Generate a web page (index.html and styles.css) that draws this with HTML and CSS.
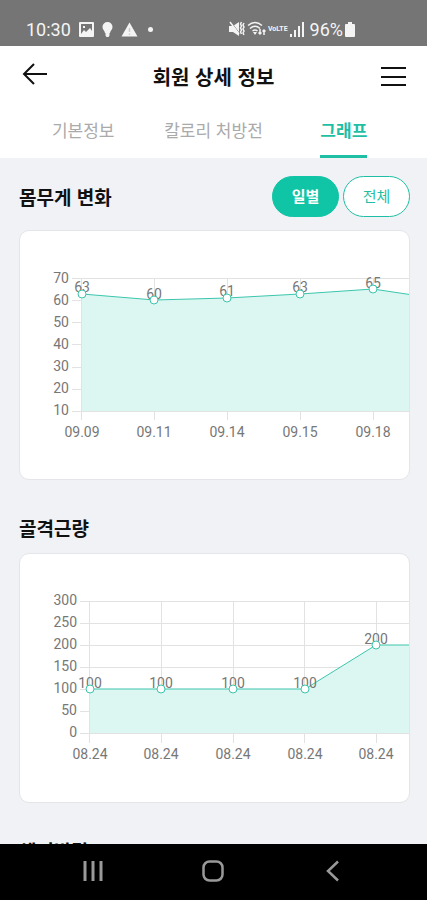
FILE: index.html
```html
<!DOCTYPE html>
<html lang="ko">
<head>
  <meta charset="UTF-8">
  <meta name="viewport" content="width=device-width, initial-scale=1.0">
  <title>회원 상세 정보</title>
  <link rel="stylesheet" href="styles.css">
</head>
<body>
  <div class="status-bar">
    <div class="status-left">
      <span>10:30</span>
      <svg width="15" height="15" viewBox="0 0 15 15">
        <path fill="#f4f4f4" fill-rule="evenodd" d="M1 0h13q1 0 1 1v13q0 1-1 1H1q-1 0-1-1V1q0-1 1-1zM2 2v10l3-4 2 2 4-4 2 3V2zM4 4h2v2H4z"/>
      </svg>
      <svg width="11" height="15" viewBox="0 0 11 15">
        <path fill="#f4f4f4" d="M5.500 0a5 5 0 0 1 5 5c0 2.500-2 3.500-2.500 6H3C2.500 8.500.5 7.500.5 5a5 5 0 0 1 5-5zM3.500 11h4v2.500l-1 1.500h-2l-1-1.500z"/>
      </svg>
      <svg width="17" height="15" viewBox="0 0 17 15">
        <path fill="#f4f4f4" d="M8.500.5L16.500 14.500H.5z"/>
        <path stroke="#ccc" stroke-width="1.500" d="M8.500 6v4M8.500 11.500v1.500"/>
      </svg>
      <svg class="dot" width="5" height="5" viewBox="0 0 5 5"><circle cx="2.500" cy="2.500" r="2.500" fill="#f4f4f4"/></svg>
    </div>
    <div class="status-right">
      <svg width="16" height="16" viewBox="0 0 16 16" fill="none" stroke="#f4f4f4">
        <path fill="#f4f4f4" stroke="none" d="M0 5h4l6-4v14l-6-4H0z"/>
        <path stroke="#757575" d="M2 1l9 12"/>
        <path stroke-width="1.500" d="M1 1l9 12M12.500 1l-1 2 1 2-1 2 1 2-1 2 1 2M15 2l-1 2 1 2-1 2 1 2-1 2 1 2"/>
      </svg>
      <svg width="19" height="16" viewBox="0 0 19 16" fill="none" stroke="#f4f4f4" stroke-width="1.500">
        <path d="M1 4.500q7-6 14 0M3 7.500q5-4.500 10 0M5.500 10q2.500-2 5 0"/>
        <path fill="#f4f4f4" stroke="none" d="M6 11h4l-2 3z"/>
        <path d="M13 8v5M11.500 11.500l1.500 1.500 1.500-1.500M17 14V9M15.500 10.500L17 9l1.500 1.500"/>
      </svg>
      <span class="volte">VoLTE</span>
      <svg width="14" height="15" viewBox="0 0 14 15" fill="#f4f4f4">
        <path d="M0 12h2v3H0zM4 8h2v7H4zM8 4h2v11H8zM12 0h2v15h-2z"/>
      </svg>
      <span class="battery">96%</span>
      <svg width="10" height="15" viewBox="0 0 10 15" fill="#f4f4f4">
        <path d="M3 0h4v2h2q1 0 1 1v11q0 1-1 1H1q-1 0-1-1V3q0-1 1-1h2z"/>
      </svg>
    </div>
  </div>

  <header class="header">
    <button class="icon-btn" aria-label="뒤로">
      <svg width="26" height="26" viewBox="0 0 26 26" fill="none" stroke="#111" stroke-width="2">
        <path d="M13 1L3 11l10 10M3 11h23"/>
      </svg>
    </button>
    <h1>회원 상세 정보</h1>
    <button class="icon-btn" aria-label="메뉴">
      <svg width="26" height="26" viewBox="0 0 26 26" stroke="#111" stroke-width="2">
        <path d="M1 5h25M1 14h25M1 22h25"/>
      </svg>
    </button>
  </header>

  <nav class="tabs">
    <a href="#info">기본정보</a>
    <a href="#calorie">칼로리 처방전</a>
    <a href="#graph" class="active">그래프</a>
  </nav>

  <main class="content">
    <section>
      <div class="section-head">
        <h2>몸무게 변화</h2>
        <div class="pills">
          <button class="pill pill-on">일별</button>
          <button class="pill">전체</button>
        </div>
      </div>
      <div class="card">
        <svg class="chart" width="480" height="248" viewBox="0 0 480 248">
          <path class="grid" d="M52 47.500H480M52 69.500H62M52 91.500H62M52 113.500H62M52 136.500H62M52 158.500H62M61.500 47V189M134.500 47V189M207.500 47V189M280.500 47V189M353.500 47V189M426.500 47V189"/>
          <path class="area" d="M62 63L134.500 69L207 67L280 63L353 58L426 69V180H62z"/>
          <path class="grid" d="M52 180.500H480"/>
          <path class="line" d="M62 63L134.500 69L207 67L280 63L353 58L426 69"/>
          <g class="label-y">
            <text x="49" y="52">70</text>
            <text x="49" y="74">60</text>
            <text x="49" y="96">50</text>
            <text x="49" y="118">40</text>
            <text x="49" y="140">30</text>
            <text x="49" y="162">20</text>
            <text x="49" y="184">10</text>
          </g>
          <g class="label-x">
            <text x="62" y="206">09.09</text>
            <text x="134" y="206">09.11</text>
            <text x="207" y="206">09.14</text>
            <text x="280" y="206">09.15</text>
            <text x="353" y="206">09.18</text>
          </g>
          <g class="label-x">
            <text x="62" y="61">63</text>
            <text x="134" y="68">60</text>
            <text x="207" y="65">61</text>
            <text x="280" y="61">63</text>
            <text x="353" y="57">65</text>
          </g>
          <g class="dots">
            <circle cx="62" cy="63" r="4"/>
            <circle cx="134" cy="69" r="4"/>
            <circle cx="207" cy="67" r="4"/>
            <circle cx="280" cy="63" r="4"/>
            <circle cx="353" cy="58" r="4"/>
          </g>
        </svg>
      </div>
    </section>

    <section>
      <div class="section-head">
        <h2>골격근량</h2>
      </div>
      <div class="card">
        <svg class="chart" width="480" height="248" viewBox="0 0 480 248">
          <path class="grid" d="M60 47.500H480M60 69.500H480M60 91.500H480M60 113.500H480M60 135.500H480M60 157.500H480M69.500 47V189M141.500 47V189M213.500 47V189M284.500 47V189M356.500 47V189M428.500 47V189"/>
          <path class="area" d="M70 135H285L356 91H428V179H70z"/>
          <path class="grid" d="M60 179.500H480"/>
          <path class="line" d="M70 135H285L356 91H428"/>
          <g class="label-y">
            <text x="57" y="51">300</text>
            <text x="57" y="73">250</text>
            <text x="57" y="95">200</text>
            <text x="57" y="117">150</text>
            <text x="57" y="139">100</text>
            <text x="57" y="161">50</text>
            <text x="57" y="183">0</text>
          </g>
          <g class="label-x">
            <text x="70" y="205">08.24</text>
            <text x="141" y="205">08.24</text>
            <text x="213" y="205">08.24</text>
            <text x="285" y="205">08.24</text>
            <text x="356" y="205">08.24</text>
          </g>
          <g class="label-x">
            <text x="70" y="134">100</text>
            <text x="141" y="134">100</text>
            <text x="213" y="134">100</text>
            <text x="285" y="134">100</text>
            <text x="356" y="90">200</text>
          </g>
          <g class="dots">
            <circle cx="70" cy="135" r="4"/>
            <circle cx="141" cy="135" r="4"/>
            <circle cx="213" cy="135" r="4"/>
            <circle cx="285" cy="135" r="4"/>
            <circle cx="356" cy="91" r="4"/>
          </g>
        </svg>
      </div>
    </section>

    <section>
      <div class="section-head">
        <h2>체지방량</h2>
      </div>
    </section>
  </main>

  <footer class="nav-bar">
    <button class="icon-btn" aria-label="최근 앱">
      <svg width="22" height="22" viewBox="0 0 22 22" stroke="#999" stroke-width="3">
        <path d="M3 1v20M11 1v20M19 1v20"/>
      </svg>
    </button>
    <button class="icon-btn" aria-label="홈">
      <svg width="22" height="22" viewBox="0 0 22 22" fill="none" stroke="#999" stroke-width="2.500">
        <rect x="1.500" y="1.500" width="19" height="19" rx="6"/>
      </svg>
    </button>
    <button class="icon-btn" aria-label="뒤로 가기">
      <svg width="22" height="22" viewBox="0 0 22 22" fill="none" stroke="#999" stroke-width="2.500">
        <path d="M15 1.500L5 11l10 9.500"/>
      </svg>
    </button>
  </footer>
</body>
</html>
```

FILE: styles.css
```css
* {
  box-sizing: border-box;
}

body {
  font-family: "Noto Sans CJK KR", sans-serif;
  margin: 0;
  height: 100vh;
  display: flex;
  flex-direction: column;
  background-color: #f1f2f6;
  color: #111;
}

h1, h2 {
  margin: 0;
  font-weight: bold;
}

button {
  font-family: inherit;
  cursor: pointer;
}

.icon-btn {
  display: flex;
  padding: 0;
  border: none;
  background: none;
}

/* Status bar */
.status-bar {
  flex: none;
  display: flex;
  justify-content: space-between;
  height: 46px;
  padding: 12px 72px 0 26px;
  background-color: #757575;
  color: #f4f4f4;
  font-family: Roboto, sans-serif;
  font-size: 18px;
}

.status-left, .status-right {
  display: flex;
  align-items: center;
  height: 34px;
}

.status-left {
  gap: 8px;
}

.status-right {
  gap: 2px;
}

.dot {
  margin-left: 2px;
}

.volte {
  font-size: 7px;
  font-weight: bold;
}

.battery {
  margin-left: 4px;
}

/* Header */
.header {
  flex: none;
  display: flex;
  align-items: center;
  justify-content: space-between;
  height: 60px;
  padding: 0 21px;
  background-color: #fff;
}

.header h1 {
  font-size: 20px;
}

.tabs {
  flex: none;
  display: grid;
  grid-template-columns: repeat(3, 1fr);
  justify-items: center;
  padding: 0 18px;
  background-color: #fff;
}

.tabs a {
  height: 52px;
  line-height: 48px;
  border-bottom: 3px solid transparent;
  color: #aaa;
  font-size: 17px;
  text-decoration: none;
}

.tabs .active {
  border-color: #1fbfa5;
  color: #1fbfa5;
  font-weight: bold;
}

/* Content */
.content {
  flex: 1;
  min-height: 0;
  overflow: hidden;
  padding: 18px 17px 0 19px;
}

.section-head {
  display: flex;
  align-items: center;
  justify-content: space-between;
  margin-bottom: 13px;
}

.section-head h2 {
  font-size: 19px;
  line-height: 24px;
}

.pills {
  display: flex;
  gap: 4px;
}

.pill {
  width: 67px;
  height: 41px;
  padding: 0 0 2px;
  border: 1px solid #1fbfa5;
  border-radius: 21px;
  background-color: #fff;
  color: #1fbfa5;
  font-size: 15px;
}

.pill-on {
  border-color: #10c4a6;
  background-color: #10c4a6;
  color: #fff;
  font-weight: bold;
}

.card {
  margin-bottom: 36px;
  border: 1px solid #e4e5e8;
  border-radius: 10px;
  background-color: #fff;
  overflow: hidden;
}

/* Charts */
.chart {
  display: block;
  font-family: Roboto, sans-serif;
  font-size: 14px;
  fill: #777;
}

.grid {
  fill: none;
  stroke: #e2e2e2;
}

.area {
  fill: #dcf7f1;
}

.line {
  fill: none;
  stroke: #3cc5ad;
}

.label-y {
  text-anchor: end;
}

.label-x {
  text-anchor: middle;
}

.dots circle {
  fill: #fff;
  stroke: #3cc5ad;
}

/* Bottom bar */
.nav-bar {
  flex: none;
  display: grid;
  grid-template-columns: repeat(3, 1fr);
  justify-items: center;
  align-items: center;
  height: 56px;
  padding: 0 33px 2px;
  background-color: #000;
}
```
